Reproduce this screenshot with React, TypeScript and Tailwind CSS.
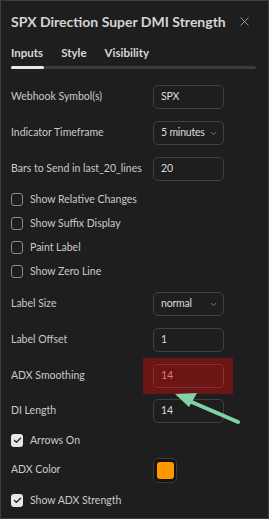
import { ChevronDown, X, Check } from 'lucide-react'

type Row =
  | { kind: 'input'; label: string; value: string; hot?: boolean; h?: string }
  | { kind: 'select'; label: string; value: string; h?: string }
  | { kind: 'check'; label: string; checked?: boolean }
  | { kind: 'color'; label: string; h?: string }

const rows: Row[] = [
  { kind: 'input', label: 'Webhook Symbol(s)', value: 'SPX' },
  { kind: 'select', label: 'Indicator Timeframe', value: '5 minutes' },
  { kind: 'input', label: 'Bars to Send in last_20_lines', value: '20' },
  { kind: 'check', label: 'Show Relative Changes' },
  { kind: 'check', label: 'Show Suffix Display' },
  { kind: 'check', label: 'Paint Label' },
  { kind: 'check', label: 'Show Zero Line' },
  { kind: 'select', label: 'Label Size', value: 'normal', h: 'h-[39px] pt-[3px]' },
  { kind: 'input', label: 'Label Offset', value: '1' },
  { kind: 'input', label: 'ADX Smoothing', value: '14', hot: true },
  { kind: 'input', label: 'DI Length', value: '14', h: 'h-[34px]' },
  { kind: 'check', label: 'Arrows On', checked: true },
  { kind: 'color', label: 'ADX Color' },
  { kind: 'check', label: 'Show ADX Strength', checked: true },
]

function Field({ row }: { row: Row }) {
  if (row.kind === 'check') {
    return (
      <div className="flex h-[24px] items-center gap-[7px] pt-[1px]">
        {row.checked ? (
          <span className="flex h-[13px] w-[12px] items-center justify-center rounded-[3px] bg-[#e6e6e6]">
            <Check className="h-[9px] w-[9px] text-[#1e1e1e]" strokeWidth={3.5} />
          </span>
        ) : (
          <span className="h-[13px] w-[12px] rounded-[3px] border border-[#8a8a8a]" />
        )}
        <span className="whitespace-nowrap text-[10.5px] text-[#c9c9c9]">{row.label}</span>
      </div>
    )
  }

  const hot = row.kind === 'input' && row.hot

  return (
    <div className={`flex items-center ${row.h ?? 'h-[36px]'}`}>
      <span className="w-[142px] whitespace-nowrap text-[10.5px] text-[#c9c9c9]">{row.label}</span>
      {row.kind === 'color' ? (
        <div className="flex h-[25px] w-[24px] items-center justify-center rounded-[5px] border border-[#3a3a3a] bg-[#151515]">
          <div className="h-[17px] w-[17px] rounded-[3px] bg-[#ff9800]" />
        </div>
      ) : (
        <div
          className={
            hot
              ? '-ml-[10px] flex h-full items-center bg-[#6b1515] pl-[10px] pr-[9px]'
              : 'flex h-full items-center'
          }
        >
          <div
            className={
              hot
                ? 'flex h-[24px] w-[71px] items-center rounded-[5px] border border-[#8a3030] px-[7px] text-[10.5px] text-[#e07a7a]'
                : 'flex h-[24px] w-[71px] items-center justify-between rounded-[5px] border border-[#404040] pl-[7px] pr-[5px] text-[10.5px] text-[#dcdcdc]'
            }
          >
            <span className="whitespace-nowrap tracking-[-0.2px]">{row.value}</span>
            {row.kind === 'select' && (
              <ChevronDown className="h-[9px] w-[9px] shrink-0 text-[#9a9a9a]" strokeWidth={2} />
            )}
          </div>
        </div>
      )}
    </div>
  )
}

export default function App() {
  return (
    <div
      className="relative h-[519px] w-[269px] overflow-hidden border border-[#3e3e3e] bg-[#1e1e1e]"
      style={{ fontFamily: 'Lato, "Noto Sans", sans-serif' }}
    >
      {/* Header */}
      <div className="flex h-[31px] items-end justify-between pl-[10px] pr-[16px]">
        <h1 className="whitespace-nowrap text-[14px] font-bold leading-[20px] text-[#d4d4d4]">
          SPX Direction Super DMI Strength
        </h1>
        <X className="mb-[3px] h-[15px] w-[15px] shrink-0 text-[#a0a0a0]" strokeWidth={1.5} />
      </div>

      {/* Tabs */}
      <div className="mt-[13px] px-[10px]">
        <div className="flex gap-[18px] text-[11.5px] font-bold leading-[16px] text-[#d8d8d8]">
          <span>Inputs</span>
          <span>Style</span>
          <span>Visibility</span>
        </div>
        <div className="mt-[5px] h-[3px] w-[245px] rounded-full bg-[#3a3a3a]">
          <div className="h-full w-[33px] rounded-full bg-[#e8e8e8]" />
        </div>
      </div>

      {/* Inputs */}
      <div className="mt-[10px] flex flex-col pl-[10px]">
        {rows.map((row) => (
          <Field key={row.label} row={row} />
        ))}
      </div>

      {/* Annotation arrow */}
      <svg className="absolute left-0 top-0" width="269" height="519" viewBox="0 0 269 519">
        <line x1="237" y1="421" x2="186" y2="399" stroke="#7fd3a6" strokeWidth="4" strokeLinecap="round" />
        <polygon points="174,393 196,392 188,406" fill="#7fd3a6" />
      </svg>
    </div>
  )
}
